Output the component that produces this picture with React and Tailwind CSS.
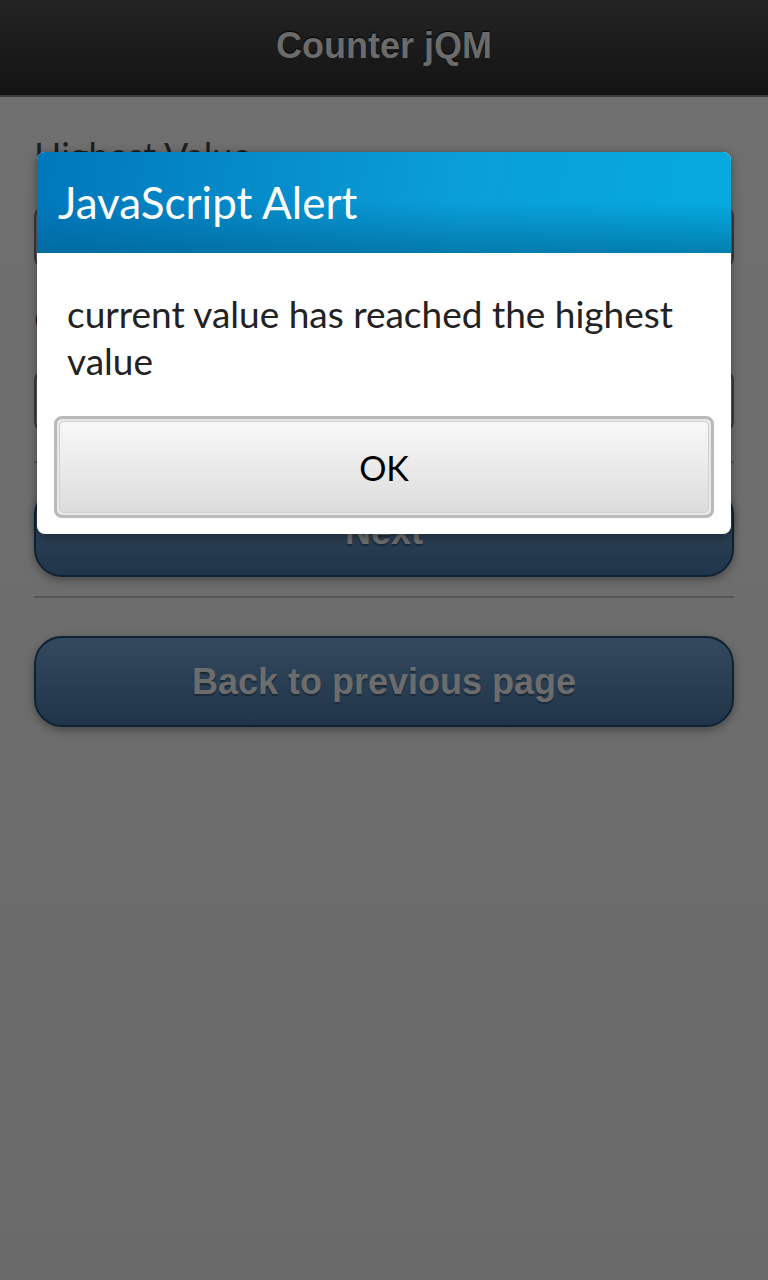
const Field = ({ label, className = '' }) => (
  <div className={className}>
    <div className="text-[36px] leading-[44px] text-[#1f1f1f] font-['Lato',sans-serif]">{label}</div>
    <div className="mt-[28px] h-[64px] rounded-xl border-2 border-[#3a3a3a] bg-[#6e6e6e] shadow-[inset_0_2px_4px_rgba(0,0,0,0.35)]" />
  </div>
);

const PageButton = ({ children, className }) => (
  <div
    className={`flex items-center justify-center rounded-[28px] border-2 border-[#0d2233] bg-gradient-to-b from-[#34495d] to-[#21354a] shadow-[0_3px_8px_rgba(0,0,0,0.35)] text-[36px] font-bold text-[#6c6c6c] [text-shadow:0_2px_1px_#1b2a38] font-['Liberation_Sans',Arial,sans-serif] ${className}`}
  >
    {children}
  </div>
);

const App = () => {
  return (
    <div className="relative w-[768px] h-[1280px] overflow-hidden bg-gradient-to-b from-[#707070] to-[#6a6a6a] font-['Liberation_Sans',Arial,sans-serif]">
      <div className="h-[97px] flex items-center justify-center bg-gradient-to-b from-[#242424] to-[#131313] border-b-2 border-[#3a3a3a]">
        <h1 className="text-[36px] font-bold text-[#6b6b6b] pb-[4px] [text-shadow:0_-1px_1px_#000]">Counter jQM</h1>
      </div>

      <div className="px-[34px] pt-[36px]">
        <Field label="Highest Value" />
        <Field label="Current Value" className="mt-[28px]" />
        <div className="mt-[28px] h-[2px] bg-[#565656]" />
        <PageButton className="mt-[24px] h-[90px]">Next</PageButton>
        <div className="mt-[19px] h-[2px] bg-[#565656]" />
        <PageButton className="mt-[38px] h-[91px]">Back to previous page</PageButton>
      </div>

      {/* alert dialog */}
      <div className="absolute left-[37px] top-[152px] w-[694px] rounded-lg overflow-hidden bg-white shadow-[0_2px_10px_rgba(0,0,0,0.4)] font-['Lato',sans-serif]">
        <div className="h-[101px] flex items-center px-[21px] bg-[linear-gradient(100deg,#0077bc_0%,#0a9ed8_60%,#05abe0_100%)] relative">
          <div className="absolute inset-0 bg-gradient-to-b from-transparent from-50% to-[#00628f]/60" />
          <span className="relative text-[44px] text-white leading-none pb-[2px]">JavaScript Alert</span>
        </div>
        <div className="px-[30px] pt-[37px] text-[37px] leading-[47px] text-[#222]">
          current value has reached the highest value
        </div>
        <div className="px-[17px] pt-[32px] pb-[16px]">
          <div className="h-[102px] rounded-[8px] border-[3px] border-[#b9b9b9] p-[2px] bg-[#e8e8e8]">
            <div className="h-full rounded-[5px] border border-[#d0d0d0] bg-gradient-to-b from-[#f8f8f8] to-[#dcdcdc] flex items-center justify-center text-[34px] text-black">
              OK
            </div>
          </div>
        </div>
      </div>
    </div>
  );
};

export default App;
